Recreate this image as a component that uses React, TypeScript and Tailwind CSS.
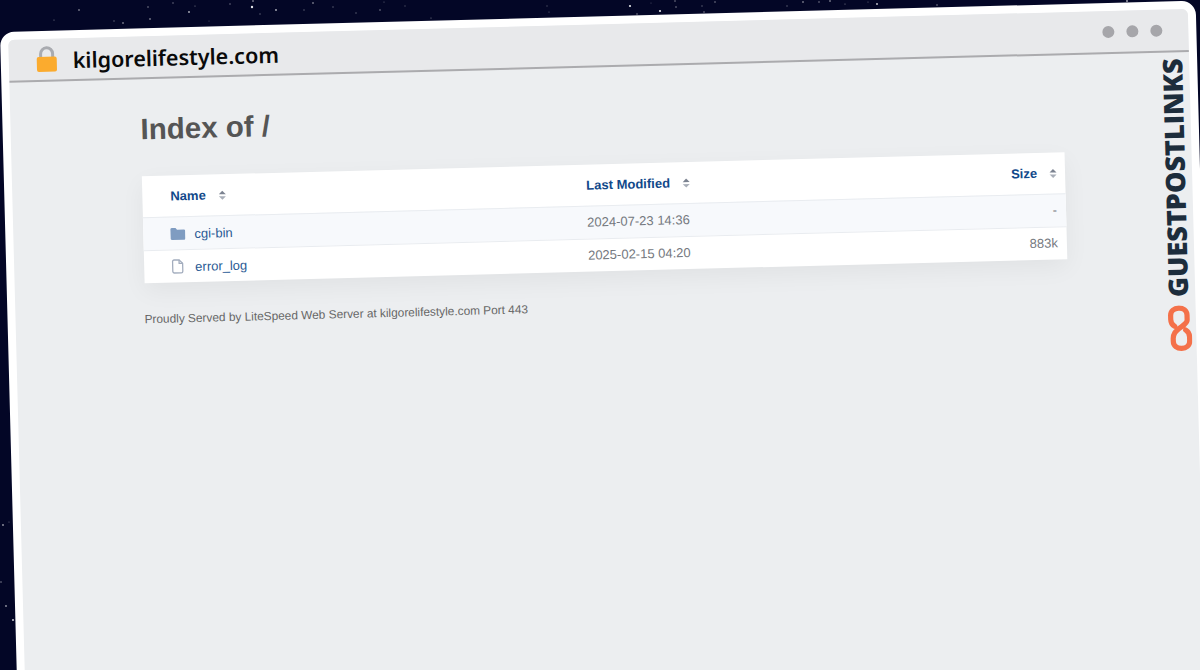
import React from "react";

// stars behind the window: x, y, radius, opacity
const stars: [number, number, number, number][] = [
  [79, 10, 0.8, 0.7], [54, 20, 0.6, 0.5], [114, 21, 0.7, 0.4], [123, 23, 0.8, 0.7], [150, 19, 0.8, 0.7],
  [148, 7, 0.7, 0.6], [173, 3, 0.7, 0.5], [189, 12, 0.9, 0.7], [195, 6, 0.6, 0.5], [209, 21, 0.6, 0.3],
  [230, 4, 0.7, 0.5], [252, 7, 1.2, 0.9], [253, 1, 0.8, 0.7], [260, 14, 0.7, 0.4], [276, 10, 0.9, 0.7],
  [304, 10, 0.7, 0.4], [313, 3, 0.8, 0.7], [333, 7, 0.7, 0.4], [356, 13, 0.7, 0.4], [380, 10, 0.8, 0.5],
  [384, 2, 0.6, 0.4], [405, 6, 0.7, 0.3], [431, 18, 0.6, 0.5], [547, 6, 0.7, 0.3], [549, 12, 0.6, 0.4],
  [630, 6, 1.1, 0.9], [637, 14, 0.7, 0.6], [660, 11, 1.1, 0.9], [675, 1, 0.7, 0.6], [676, 7, 0.7, 0.6],
  [651, 3, 0.6, 0.3], [702, 6, 0.7, 0.4], [704, 12, 0.7, 0.6], [715, 2, 0.7, 0.6], [787, 6, 0.7, 0.4],
  [803, 2, 0.8, 0.7], [819, 2, 0.7, 0.6], [830, 1, 0.8, 0.7], [845, 4, 0.6, 0.5], [868, 2, 0.6, 0.4],
  [877, 4, 0.9, 0.8], [937, 5, 0.7, 0.6], [1127, 1, 0.9, 0.7], [3, 525, 0.9, 0.6], [9, 522, 0.6, 0.4],
  [1, 582, 0.8, 0.5], [6, 606, 0.9, 0.6], [13, 620, 1, 0.8],
];

const SortArrows = () => (
  <svg width="8" height="10" viewBox="0 0 8 10" className="shrink-0">
    <path d="M4 0.5 7.500 4H.5z" fill="#7b8290" />
    <path d="M4 9.500 .5 6h7z" fill="#a8aeb8" />
  </svg>
);

const FolderIcon = () => (
  <svg width="15" height="13" viewBox="0 0 15 13" className="shrink-0">
    <path d="M1.500 .5h3.800l1.500 1.700h6.700c.8 0 1.500.7 1.500 1.500v7.300c0 .8-.7 1.500-1.500 1.500h-12c-.8 0-1.500-.7-1.500-1.500v-9c0-.8.700-1.500 1.500-1.500z" fill="#7f9cc1" />
  </svg>
);

const FileIcon = () => (
  <svg width="14" height="16" viewBox="0 0 14 16" fill="none" className="-mt-px shrink-0">
    <path d="M3 1.500h5l3.500 3.500v8c0 .8-.7 1.500-1.500 1.500h-7c-.8 0-1.500-.7-1.500-1.500v-10c0-.8.700-1.500 1.500-1.500z" stroke="#a3adbe" strokeWidth="1.300" />
    <path d="M8 1.500v3.500h3.500" stroke="#a3adbe" strokeWidth="1.300" />
  </svg>
);

const ChainIcon = () => (
  <svg width="24" height="46" viewBox="0 0 24 46" fill="none" className="ml-[4px] shrink-0">
    <path
      d="M6.500 21C4 19.500 2.800 17 2.800 14V10C2.800 5.500 6.500 2.800 11 2.800S19.200 5.500 19.200 10V15C19.200 20 10 22 6.500 27.500C5.200 29.500 4.800 31 4.800 33V36C4.800 40.500 8.500 43.200 13 43.200S21.200 40.500 21.200 36V32C21.200 29 20 26.500 17.500 25"
      stroke="#f4714a"
      strokeWidth="5.200"
      strokeLinecap="round"
    />
  </svg>
);

export default function App() {
  return (
    <main className="relative h-[670px] w-[1200px] overflow-hidden bg-[#030626] pt-[32px] font-['Liberation_Sans',sans-serif]">
      <svg width="1200" height="670" className="absolute left-0 top-0">
        {stars.map(([x, y, r, o], i) => (
          <circle key={i} cx={x} cy={y} r={r} fill="#fff" opacity={o} />
        ))}
      </svg>

      {/* browser window, tilted as a whole */}
      <div className="relative h-[720px] w-[1196px] origin-top-left -rotate-[1.5deg] rounded-t-[14px] bg-white p-2">
        <div className="h-full overflow-hidden rounded-t-[6px] bg-[#eceef0]">
          <header className="flex h-[43px] items-center justify-between border-b-2 border-[#ababae] bg-[#e8e9eb] pl-[27px] pr-[26px]">
            <div className="flex items-center gap-[15px]">
              <svg width="22" height="27" viewBox="0 0 22 27" fill="none" className="shrink-0">
                <path d="M5 13V8a6 6 0 0 1 12 0v5" stroke="#a9abb0" strokeWidth="3" />
                <rect x="1" y="11" width="20" height="15" rx="2" fill="#fbab2e" />
              </svg>
              <span className="mt-[3px] font-['Noto_Sans',sans-serif] text-[21.5px] font-semibold leading-none text-[#0a0a0a]">
                kilgorelifestyle.com
              </span>
            </div>
            <div className="flex items-center gap-3">
              <span className="h-3 w-3 rounded-full bg-[#a6a6aa]" />
              <span className="h-3 w-3 rounded-full bg-[#a6a6aa]" />
              <span className="h-3 w-3 rounded-full bg-[#a6a6aa]" />
            </div>
          </header>

          <section className="pl-[130px] pt-[32px]">
            <h1 className="text-[29.5px] font-bold leading-[36px] text-[#555555]">Index of /</h1>

            <div className="mt-[29px] w-[923px] bg-white text-[13px] shadow-[0_8px_24px_rgba(0,0,0,0.05)]">
              <div className="flex h-[41px] items-center pl-[28px] pr-[8px] font-bold text-[#11498a]">
                <div className="flex w-[416px] items-center gap-[13px]">
                  Name <SortArrows />
                </div>
                <div className="flex w-[300px] items-center gap-3">
                  Last Modified <SortArrows />
                </div>
                <div className="flex flex-1 items-center justify-end gap-3">
                  Size <SortArrows />
                </div>
              </div>
              <div className="flex h-[33px] items-center border-t border-[#e9ecf0] bg-[#f7f9fc] pl-[27px] pr-[9px] pt-px">
                <div className="flex w-[417px] items-center gap-[9px] text-[#2a5a94]">
                  <FolderIcon /> cgi-bin
                </div>
                <div className="-mt-px w-[300px] text-[#74787e]">2024-07-23 14:36</div>
                <div className="-mt-px flex-1 text-right text-[#74787e]">-</div>
              </div>
              <div className="flex h-[33px] items-center border-t border-[#e9ecf0] pl-[27px] pr-[9px] pt-px">
                <div className="flex w-[417px] items-center gap-[10px] text-[#2a5a94]">
                  <FileIcon /> error_log
                </div>
                <div className="-mt-px w-[300px] text-[#74787e]">2025-02-15 04:20</div>
                <div className="-mt-px flex-1 text-right text-[#74787e]">883k</div>
              </div>
            </div>

            <p className="-ml-px mt-[28px] text-[11.85px] leading-4 text-[#666666]">
              Proudly Served by LiteSpeed Web Server at kilgorelifestyle.com Port 443
            </p>
          </section>
        </div>

        {/* vertical watermark sits over the window's right edge */}
        <div className="absolute left-[1156px] top-[57px] flex h-[293px] w-[28px] flex-col items-center justify-between">
          <span className="rotate-180 whitespace-nowrap font-['Open_Sans',sans-serif] text-[27px] font-extrabold leading-[27px] text-[#1d2d3c] [writing-mode:vertical-rl]">
            GUESTPOSTLINKS
          </span>
          <ChainIcon />
        </div>
      </div>
    </main>
  );
}
